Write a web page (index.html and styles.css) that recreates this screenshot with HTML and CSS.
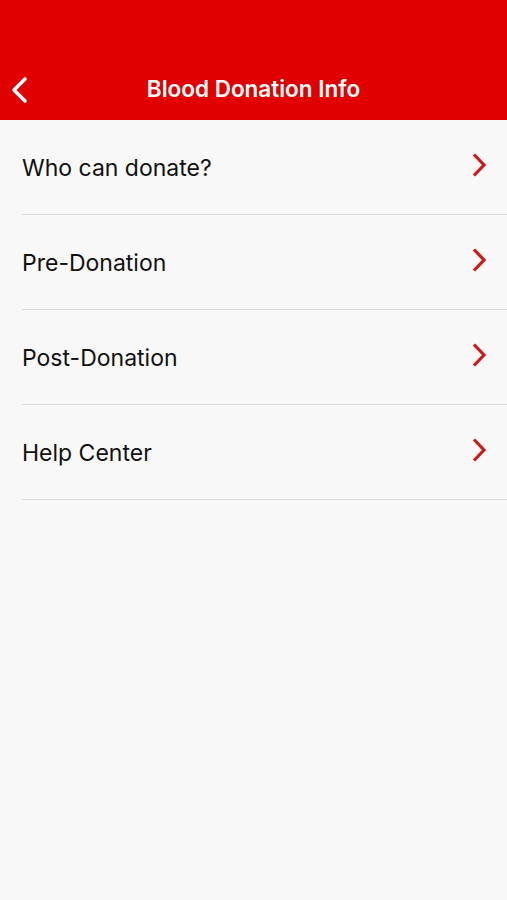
FILE: index.html
```html
<!DOCTYPE html>
<html lang="en">
<head>
    <meta charset="UTF-8">
    <meta name="viewport" content="width=device-width, initial-scale=1.0">
    <title>Blood Donation Info</title>
    <link rel="stylesheet" href="styles.css">
</head>
<body>
    <div class="header">
        <div class="nav-bar">
            <div class="back-button">
                <svg width="18" height="28" viewBox="0 0 18 28">
                    <path d="M15 3 L4 14 L15 25" fill="none" stroke="#fff" stroke-width="3.6" stroke-linecap="round" stroke-linejoin="round"/>
                </svg>
            </div>
            <div class="title">Blood Donation Info</div>
        </div>
    </div>
    <div class="menu-list">
        <div class="menu-item">
            <span class="label">Who can donate?</span>
            <svg class="chevron" width="16" height="26" viewBox="0 0 16 26">
                <path d="M3 2.5 L13 13 L3 23.5" fill="none" stroke="#d01818" stroke-width="3.2"/>
            </svg>
        </div>
        <div class="menu-item">
            <span class="label">Pre-Donation</span>
            <svg class="chevron" width="16" height="26" viewBox="0 0 16 26">
                <path d="M3 2.5 L13 13 L3 23.5" fill="none" stroke="#d01818" stroke-width="3.2"/>
            </svg>
        </div>
        <div class="menu-item">
            <span class="label">Post-Donation</span>
            <svg class="chevron" width="16" height="26" viewBox="0 0 16 26">
                <path d="M3 2.5 L13 13 L3 23.5" fill="none" stroke="#d01818" stroke-width="3.2"/>
            </svg>
        </div>
        <div class="menu-item">
            <span class="label">Help Center</span>
            <svg class="chevron" width="16" height="26" viewBox="0 0 16 26">
                <path d="M3 2.5 L13 13 L3 23.5" fill="none" stroke="#d01818" stroke-width="3.2"/>
            </svg>
        </div>
    </div>
</body>
</html>
```

FILE: styles.css
```css
body {
    margin: 0;
    height: 900px;
    background-color: #f8f8f8;
    font-family: Inter, "Liberation Sans", Arial, sans-serif;
}

.header {
    background-color: #e00000;
    height: 120px;
    display: flex;
    flex-direction: column;
    justify-content: flex-end;
}

.nav-bar {
    height: 60px;
    display: flex;
    align-items: center;
    justify-content: center;
    position: relative;
}

.back-button {
    position: absolute;
    left: 10px;
    top: 16px;
    display: flex;
}

.title {
    color: #fff;
    font-size: 22.5px;
    font-weight: 600;
    margin-top: -3px;
}

.menu-list {
    padding-left: 22px;
}

.menu-item {
    height: 94px;
    border-bottom: 1px solid #dcdcdc;
    display: flex;
    align-items: center;
    justify-content: space-between;
    padding-right: 20px;
}

.label {
    font-size: 23px;
    color: #111;
    margin-top: 2px;
}

.chevron {
    margin-top: -4px;
}
```
